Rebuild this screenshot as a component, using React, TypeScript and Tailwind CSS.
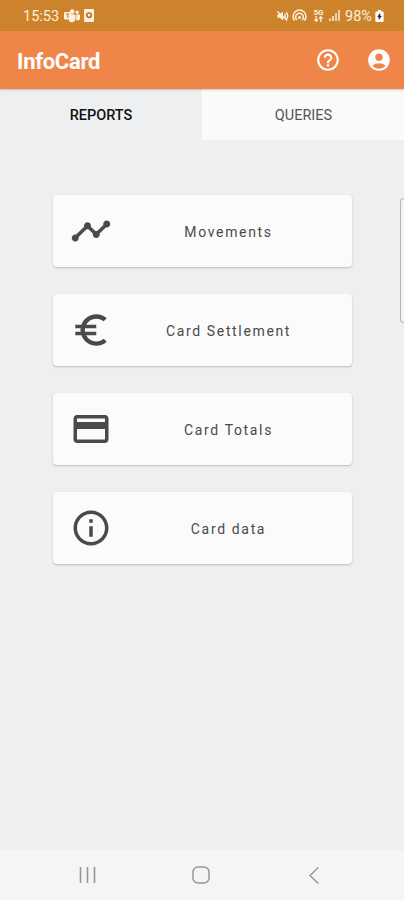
import type { ReactNode } from "react";
import { MdAccountCircle, MdEuroSymbol, MdHelpOutline, MdInfoOutline, MdPayment, MdTimeline } from "react-icons/md";

const items = [
    { label: "Movements", icon: <MdTimeline size={42} /> },
    { label: "Card Settlement", icon: <MdEuroSymbol size={42} /> },
    { label: "Card Totals", icon: <MdPayment size={42} /> },
    { label: "Card data", icon: <MdInfoOutline size={42} /> },
];

function StatusBar() {
    return <div className="flex items-center h-[31px] bg-[#cc832b] text-[#fdf0dd] pl-[23px] pr-[20px] text-[14.5px]">
        <span className="w-[37px] pt-[2px] whitespace-nowrap">15:53</span>
        <svg className="ml-[4px]" width="16" height="14" viewBox="0 0 16 14" fill="currentColor">
            <circle cx="8.2" cy="2.6" r="2.4" />
            <circle cx="13.2" cy="3.2" r="1.7" />
            <path d="M5 5.6h6.5v4.2a3.6 3.6 0 0 1-6.5 2z" />
            <path d="M12.2 5.6H16v3.6a2.4 2.4 0 0 1-3.8 1.9z" />
            <rect y="3" width="7.4" height="7.6" rx="1" />
            <path d="M2 5h3.4M3.7 5v4" stroke="#cc832b" strokeWidth="1.1" />
        </svg>
        <svg className="ml-[4px]" width="10" height="13" viewBox="0 0 10 13">
            <rect width="10" height="13" rx="1" fill="currentColor" />
            <circle cx="5" cy="6.2" r="2.2" fill="none" stroke="#b97522" strokeWidth="1.7" />
        </svg>
        <div className="flex items-center ml-auto">
            <svg width="13" height="12" viewBox="0 0 13 13" fill="none" stroke="currentColor">
                <path d="M1 4.5h2.5L7 1.5v10L3.5 8.5H1z" fill="currentColor" stroke="none" />
                <path d="M8.6 4.2c1 1.2 1 3.4 0 4.6M10.4 2.4c2 2.4 2 5.8 0 8.2" strokeWidth="1.5" />
                <path d="M1 1.5l10.5 10" strokeWidth="1.5" />
            </svg>
            <svg className="ml-[3px]" width="15" height="13" viewBox="0 0 15 13" fill="none" stroke="currentColor" strokeWidth="1.5">
                <path d="M2.6 11.6A6.4 6.4 0 1 1 12.4 11.6" />
                <path d="M4.8 11A3.9 3.9 0 1 1 10.2 11" />
                <circle cx="7.5" cy="8.4" r="1.5" fill="currentColor" stroke="none" />
            </svg>
            <div className="ml-[6px] w-[11px] flex flex-col items-center">
                <span className="text-[8px] leading-[7px] font-bold">5G</span>
                <svg width="9" height="6" viewBox="0 0 9 6" fill="none" stroke="currentColor" strokeWidth="1.3">
                    <path d="M2.2 0v5M.5 3.5l1.7 1.7 1.7-1.7M6.8 6V1M5.1 2.5L6.8.8l1.7 1.7" />
                </svg>
            </div>
            <svg className="ml-[5px]" width="11" height="11" viewBox="0 0 11 11" fill="currentColor">
                <path d="M0 8.5h2V11H0zM3 6h2v5H3z" opacity=".8" />
                <path d="M6 3h2v8H6zM9 0h2v11H9z" opacity=".7" />
            </svg>
            <span className="ml-[5px] w-[29px] pt-[2px] whitespace-nowrap">98%</span>
            <svg className="ml-[1px]" width="9" height="12" viewBox="0 0 9 13">
                <path d="M2.7 0h3.6v1.5H8a1 1 0 0 1 1 1V12a1 1 0 0 1-1 1H1a1 1 0 0 1-1-1V2.5a1 1 0 0 1 1-1h1.7z" fill="#fff" />
                <path d="M4.9 4L2.6 7.4h1.6L4 10l2.4-3.4H4.8z" fill="#222" stroke="#222" strokeWidth=".8" />
            </svg>
        </div>
    </div>
}

function Card({ label, icon }: { label: string; icon: ReactNode }) {
    return <button className="flex items-center h-[72px] pl-[17px] bg-[#fbfbfb] rounded-[4px] shadow-[0_1px_2px_rgba(0,0,0,0.22)] text-[#4a4a4a]">
        {icon}
        <span className="flex-1 pt-[2px] pl-[9px] pr-[16px] text-center text-[14px] tracking-[1.65px] whitespace-nowrap">{label}</span>
    </button>
}

export default function App() {
    return <div className="relative flex flex-col h-screen overflow-hidden bg-[#edeff1] font-['Roboto',sans-serif]">
        <StatusBar />
        <header className="relative flex items-center h-[58px] pl-[17px] pr-[12px] bg-[#f0854a] text-white shadow-[0_1px_2px_rgba(0,0,0,0.2)]">
            <h1 className="pt-[2px] text-[22px] font-bold tracking-[-0.3px]">InfoCard</h1>
            <MdHelpOutline className="ml-auto" size={26} />
            <MdAccountCircle className="ml-[25px]" size={26} />
        </header>
        <nav className="grid grid-cols-2 h-[51px] text-[14.5px]">
            <button className="pt-[2px] font-medium text-[#111]">REPORTS</button>
            <button className="pt-[2px] pl-[1px] bg-[#fafafa] text-[#555]">QUERIES</button>
        </nav>
        <main className="flex-1 flex flex-col gap-[27px] pt-[55px] pl-[53px] pr-[52px]">
            {items.map((item) => <Card key={item.label} label={item.label} icon={item.icon} />)}
        </main>
        {/* edge panel handle */}
        <div className="absolute right-0 top-[198px] w-[4px] h-[125px] rounded-l-[4px] border border-r-0 border-[#b5b5b5] bg-[#f3f3f3]"></div>
        <footer className="flex items-center h-[50px] bg-[#f5f5f5] text-[#969696]">
            <svg className="ml-[79px]" width="17" height="16" viewBox="0 0 17 16" stroke="currentColor" strokeWidth="1.6">
                <path d="M1.5 0v16M8.5 0v16M15.5 0v16" />
            </svg>
            <svg className="ml-[96px]" width="18" height="18" viewBox="0 0 18 18" fill="none" stroke="currentColor" strokeWidth="1.5">
                <rect x="1" y="1" width="16" height="16" rx="5" />
            </svg>
            <svg className="ml-[99px]" width="10" height="17" viewBox="0 0 10 17" fill="none" stroke="currentColor" strokeWidth="1.4">
                <path d="M9.3.5L1 8.5l8.3 8" />
            </svg>
        </footer>
    </div>
}
